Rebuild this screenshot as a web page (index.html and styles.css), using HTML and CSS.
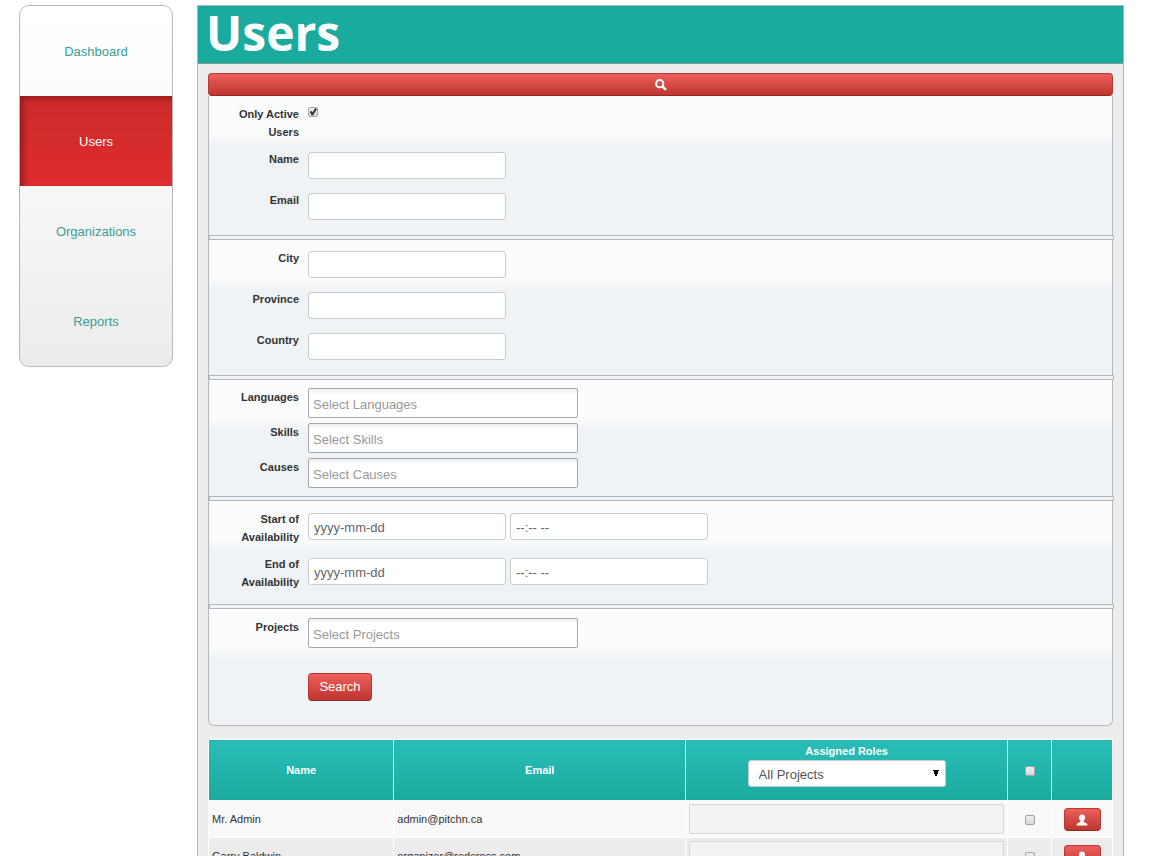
FILE: index.html
```html
<!DOCTYPE html>
<html lang="en">
<head>
<meta charset="utf-8">
<title>Users</title>
<link rel="stylesheet" href="styles.css">
</head>
<body>
<div class="shell">
  <nav class="sidebar" aria-label="Main">
    <a class="nav-link" href="#dashboard">Dashboard</a>
    <a class="nav-link active" href="#users" aria-current="page">Users</a>
    <a class="nav-link" href="#organizations">Organizations</a>
    <a class="nav-link" href="#reports">Reports</a>
  </nav>
  <main class="content">
    <h1 class="title">Users</h1>
    <div class="body">
      <button class="btn toggle" type="button" aria-label="Toggle search">
        <svg width="12" height="12" viewBox="0 0 12 12" aria-hidden="true"><circle cx="4.700" cy="4.700" r="3.600" fill="none" stroke="#fff" stroke-width="2"/><path d="M7.600 7.600 10.200 10.200" stroke="#fff" stroke-width="2.600" stroke-linecap="round"/></svg>
      </button>
      <form class="filters">
        <div class="group">
          <div class="row tall"><label class="label" for="active">Only Active Users</label><input class="check" id="active" type="checkbox" checked></div>
          <div class="row"><label class="label" for="name">Name</label><input class="field" id="name" type="text"></div>
          <div class="row"><label class="label" for="email">Email</label><input class="field" id="email" type="text"></div>
        </div>
        <hr class="divider">
        <div class="group">
          <div class="row"><label class="label" for="city">City</label><input class="field" id="city" type="text"></div>
          <div class="row"><label class="label" for="province">Province</label><input class="field" id="province" type="text"></div>
          <div class="row"><label class="label" for="country">Country</label><input class="field" id="country" type="text"></div>
        </div>
        <hr class="divider">
        <div class="group pickers">
          <div class="row chosen"><label class="label" for="languages">Languages</label><input class="picker" id="languages" type="text" placeholder="Select Languages"></div>
          <div class="row chosen"><label class="label" for="skills">Skills</label><input class="picker" id="skills" type="text" placeholder="Select Skills"></div>
          <div class="row chosen"><label class="label" for="causes">Causes</label><input class="picker" id="causes" type="text" placeholder="Select Causes"></div>
        </div>
        <hr class="divider">
        <div class="group dates">
          <div class="row tall"><label class="label" for="start">Start of Availability</label><input class="field" id="start" type="text" placeholder="yyyy-mm-dd"><input class="field" type="text" placeholder="--:-- --" aria-label="Start time"></div>
          <div class="row tall"><label class="label" for="end">End of Availability</label><input class="field" id="end" type="text" placeholder="yyyy-mm-dd"><input class="field" type="text" placeholder="--:-- --" aria-label="End time"></div>
        </div>
        <hr class="divider">
        <div class="group last">
          <div class="row chosen"><label class="label" for="projects">Projects</label><input class="picker" id="projects" type="text" placeholder="Select Projects"></div>
          <button class="btn submit" type="submit">Search</button>
        </div>
      </form>
      <table class="users">
        <colgroup><col class="c-name"><col class="c-email"><col class="c-roles"><col class="c-check"><col class="c-action"></colgroup>
        <thead>
          <tr>
            <th>Name</th>
            <th>Email</th>
            <th><label class="roles-label" for="roles">Assigned Roles</label><select class="field select" id="roles"><option>All Projects</option></select></th>
            <th><input class="check" type="checkbox" aria-label="Select all users"></th>
            <th></th>
          </tr>
        </thead>
        <tbody>
          <tr>
            <td>Mr. Admin</td>
            <td>admin@pitchn.ca</td>
            <td><input class="roles" type="text" disabled aria-label="Roles of Mr. Admin"></td>
            <td class="center"><input class="check" type="checkbox" aria-label="Select Mr. Admin"></td>
            <td class="center"><button class="btn person" type="button" aria-label="View Mr. Admin"><svg width="12" height="12" viewBox="0 0 12 12" aria-hidden="true"><path fill="#fff" d="M6 .5c1.900 0 3 1.100 3 2.900 0 1.500-.6 2.600-1.500 3.300v1.100c.5.9 4 1 4 3.700H.5c0-2.700 3.500-2.800 4-3.700V6.700C3.600 6 3 4.900 3 3.400 3 1.600 4.100.5 6 .5Z"/></svg></button></td>
          </tr>
          <tr>
            <td>Garry Baldwin</td>
            <td>organizer@redcross.com</td>
            <td><input class="roles" type="text" disabled aria-label="Roles of Garry Baldwin"></td>
            <td class="center"><input class="check" type="checkbox" aria-label="Select Garry Baldwin"></td>
            <td class="center"><button class="btn person" type="button" aria-label="View Garry Baldwin"><svg width="12" height="12" viewBox="0 0 12 12" aria-hidden="true"><path fill="#fff" d="M6 .5c1.900 0 3 1.100 3 2.900 0 1.500-.6 2.600-1.500 3.300v1.100c.5.9 4 1 4 3.700H.5c0-2.700 3.500-2.800 4-3.700V6.700C3.600 6 3 4.900 3 3.400 3 1.600 4.100.5 6 .5Z"/></svg></button></td>
          </tr>
        </tbody>
      </table>
    </div>
  </main>
</div>
</body>
</html>
```
FILE: styles.css
```css
*, *::before, *::after { box-sizing: border-box; }

body {
  margin: 0;
  height: 100vh;
  overflow: hidden;
  background: #fff;
  color: #333;
  font: 11px/18px Arial, "Liberation Sans", sans-serif;
}

input, select, button { margin: 0; font: 13px/18px Arial, "Liberation Sans", sans-serif; }

.shell {
  display: flex;
  align-items: flex-start;
  gap: 24px;
  padding: 5px 41px 0 19px;
}

.sidebar {
  flex: 0 0 154px;
  display: flex;
  flex-direction: column;
  overflow: hidden;
  border: 1px solid #b8b8b8;
  border-radius: 10px;
  background: linear-gradient(#fff, #fcfcfc 25%, #ececec);
}

.nav-link {
  padding: 37px 0 35px;
  color: #3a9e93;
  font-size: 13px;
  text-align: center;
  text-decoration: none;
}

.nav-link.active {
  color: #fff;
  background: linear-gradient(#cb2a2a, #e02c2e);
  box-shadow: inset 5px 4px 6px -2px #8f1a1c;
}

.content {
  flex: 1;
  min-width: 0;
  border: 1px solid #b2b5b8;
  background: #ededed;
}

.title {
  margin: 0;
  padding: 0 8px 4px;
  border-bottom: 1px solid #7f9f9b;
  background: #1aab9e;
  color: #fff;
  font: bold 48px/53px "Open Sans", sans-serif;
}

.body { padding: 9px 10px 10px; }

.btn {
  display: flex;
  align-items: center;
  justify-content: center;
  padding: 0;
  border: 1px solid #b83a38;
  border-bottom-color: #942a28;
  border-radius: 4px;
  background: linear-gradient(#ee5f5b, #bd362f);
  color: #fff;
}

.toggle { width: 100%; height: 23px; }

.filters {
  border: 1px solid #b2b7bd;
  border-top: 0;
  border-radius: 0 0 6px 6px;
  background: #f0f3f6;
}

.group {
  padding: 9px 0 3px;
  background: linear-gradient(#fbfcfe, #fafcfd 38px, #f0f3f6 50px);
}

.group.pickers { padding-top: 8px; }
.group.dates { padding-bottom: 4px; }
.group.last { padding-bottom: 24px; border-radius: 0 0 6px 6px; }

.divider {
  height: 5px;
  margin: 0 -2px 0 0;
  border: 1px solid #b2b7bd;
  background: #f0f3f6;
}

.row {
  display: flex;
  align-items: flex-start;
  gap: 4px;
  padding-bottom: 12px;
}

.row.tall { padding-bottom: 9px; }
.row.chosen { padding-bottom: 5px; }

.label {
  width: 90px;
  margin-right: 5px;
  padding-left: 20px;
  font-weight: bold;
  text-align: right;
}

.field {
  width: 198px;
  height: 27px;
  margin-top: 2px;
  padding: 2px 5px 0;
  border: 1px solid #c8ccd0;
  border-radius: 3px;
  background: #fff;
  color: #555;
}

.dates .field { margin-top: 3px; }
.field::placeholder { color: #666; }

.picker {
  width: 270px;
  height: 30px;
  padding: 3px 4px 0;
  border: 1px solid #a4a7aa;
  border-radius: 2px;
  background: linear-gradient(#eee, #fff 5px);
}

.picker::placeholder { color: #999; }

.check {
  appearance: none;
  display: inline-grid;
  place-items: center;
  width: 10px;
  height: 10px;
  border: 1px solid #a3a3a3;
  border-radius: 2px;
  background: linear-gradient(#f0f0f0, #d8d8d8);
}

.row .check { margin-top: 2px; }

.check:checked::before {
  content: "";
  width: 8px;
  height: 8px;
  background: #333;
  clip-path: polygon(10% 50%, 30% 35%, 42% 55%, 80% 0, 100% 12%, 48% 95%, 35% 95%);
}

.submit {
  width: 64px;
  height: 28px;
  margin: 20px 0 0 99px;
}

.users {
  width: 100%;
  margin-top: 13px;
  border-collapse: collapse;
  table-layout: fixed;
}

.c-name { width: 20.5%; }
.c-email { width: 32.3%; }
.c-roles { width: 35.6%; }
.c-check { width: 44px; }
.c-action { width: 61px; }

.users th, .users td { border: 1px solid #fff; }

.users th {
  height: 61px;
  padding: 0;
  background: linear-gradient(#2abdb9, #1baa9d);
  color: #fff;
  vertical-align: middle;
}

.users td { height: 37px; padding: 3px; background: #f9f9f9; }
.users tbody tr:nth-child(even) td { background: #ececec; }
.users .center { text-align: center; }
.users .check { vertical-align: middle; }

.roles-label { display: block; line-height: 17px; }

.select {
  appearance: none;
  display: block;
  margin: 0 auto 10px;
  padding: 3px 10px 0;
  background-image:
    linear-gradient(to bottom left, #000 50%, transparent 51%),
    linear-gradient(to bottom right, #000 50%, transparent 51%);
  background-repeat: no-repeat;
  background-size: 3px 7px;
  background-position: right 9px top 9px, right 6px top 9px;
}

.roles {
  display: block;
  width: 100%;
  height: 30px;
  border: 1px solid #d6d6d6;
  border-radius: 2px;
  background: #f3f3f3;
}

.person { width: 37px; height: 23px; margin: 1px auto 0; }
```
